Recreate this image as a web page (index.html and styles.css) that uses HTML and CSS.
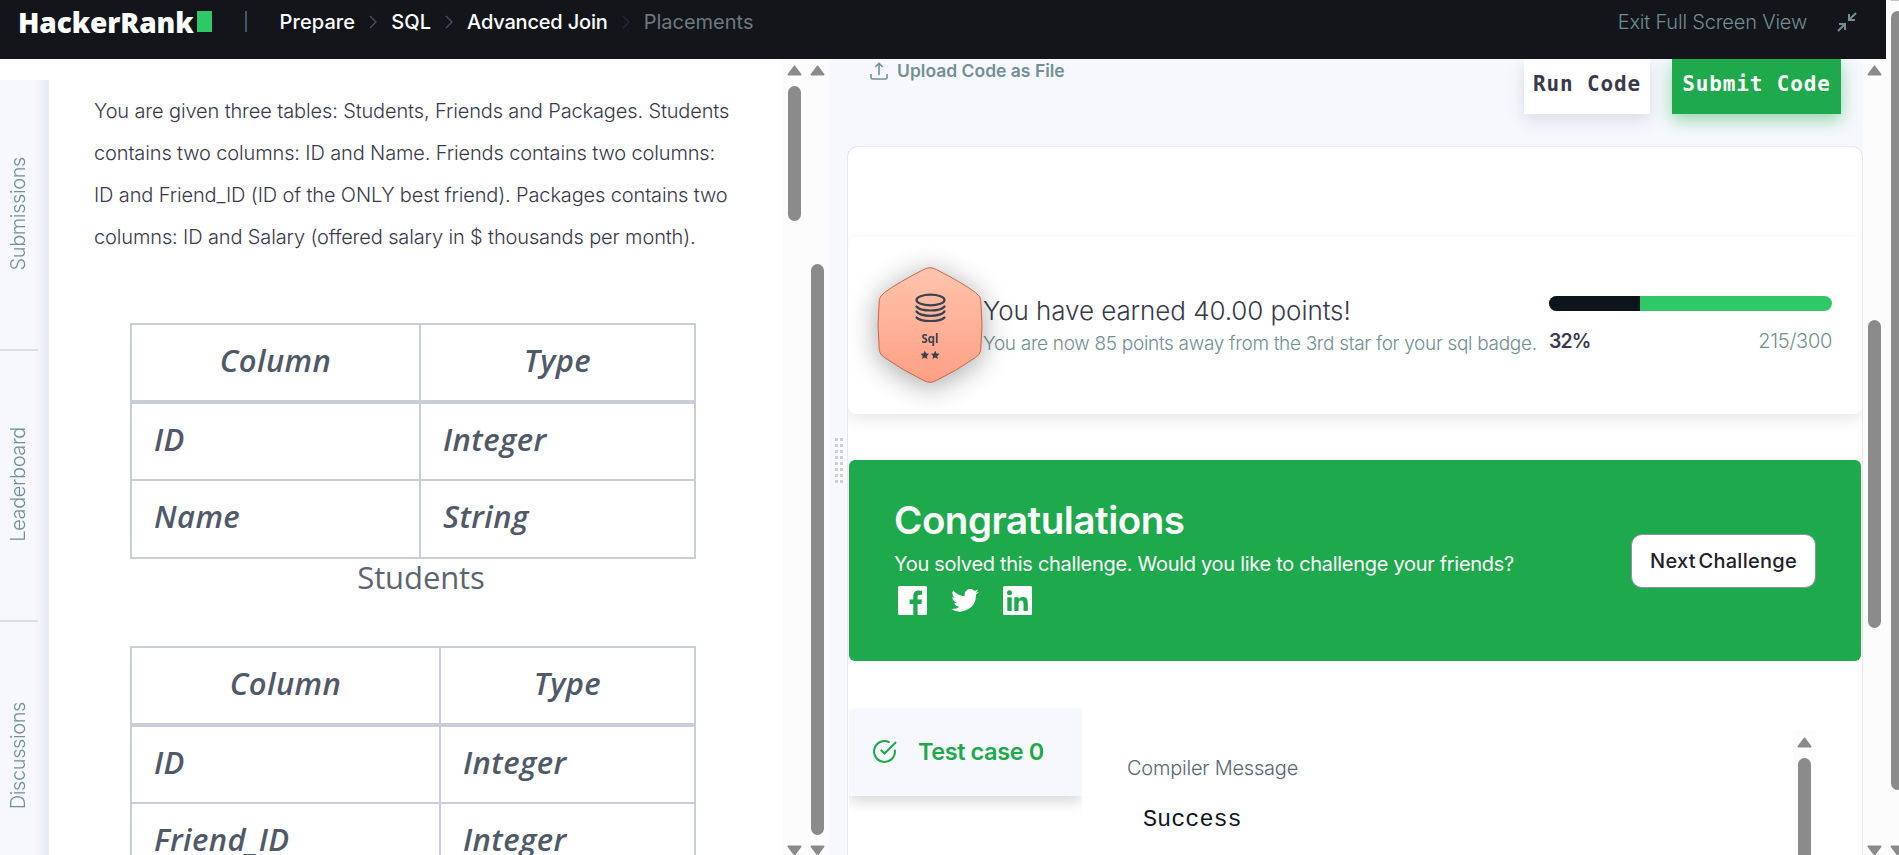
FILE: index.html
```html
<!DOCTYPE html>
<html lang="en">
<head>
<meta charset="utf-8">
<title>Placements | HackerRank</title>
<link rel="stylesheet" href="styles.css">
</head>
<body>
<div class="window">
  <div class="app">
    <header class="topbar">
      <span class="logo"><span class="logo-text">HackerRank</span><i class="logo-block"></i></span>
      <i class="topbar-divider"></i>
      <nav class="crumbs">
        <a class="crumb">Prepare</a>
        <svg class="chev" viewBox="0 0 8 14"><path d="M1 1l6 6-6 6"/></svg>
        <a class="crumb">SQL</a>
        <svg class="chev" viewBox="0 0 8 14"><path d="M1 1l6 6-6 6"/></svg>
        <a class="crumb long">Advanced Join</a>
        <svg class="chev dim" viewBox="0 0 8 14"><path d="M1 1l6 6-6 6"/></svg>
        <span class="current">Placements</span>
      </nav>
      <a class="exit"><span>Exit Full Screen View</span>
        <svg class="exit-icon" viewBox="0 0 20 20"><path d="M19 1l-7 7M12 2v6h6M1 19l7-7M2 12h6v6"/></svg>
      </a>
    </header>
    <div class="work">
      <aside class="sidenav">
        <a class="side-tab"><span>Submissions</span></a>
        <a class="side-tab"><span>Leaderboard</span></a>
        <a class="side-tab"><span>Discussions</span></a>
      </aside>
      <section class="problem">
        <p class="statement">
          You are given three tables: Students, Friends and Packages. Students<br>
          contains two columns: ID and Name. Friends contains two columns:<br>
          ID and Friend_ID (ID of the ONLY best friend). Packages contains two<br>
          columns: ID and Salary (offered salary in $ thousands per month).
        </p>
        <div class="schema students">
          <div class="th">Column</div><div class="th">Type</div>
          <div class="td">ID</div><div class="td">Integer</div>
          <div class="td">Name</div><div class="td">String</div>
        </div>
        <div class="schema-name">Students</div>
        <div class="schema friends">
          <div class="th">Column</div><div class="th">Type</div>
          <div class="td">ID</div><div class="td">Integer</div>
          <div class="td">Friend_ID</div><div class="td">Integer</div>
        </div>
      </section>
      <div class="scroll s-inner"><svg class="up" viewBox="0 0 15 11"><path d="M7.5 1.5L13.5 9.5H1.5Z"/></svg><i class="thumb"></i><svg class="down" viewBox="0 0 15 11"><path d="M1.5 1.5H13.5L7.5 9.5Z"/></svg></div>
      <div class="scroll s-outer"><svg class="up" viewBox="0 0 15 11"><path d="M7.5 1.5L13.5 9.5H1.5Z"/></svg><i class="thumb"></i><svg class="down" viewBox="0 0 15 11"><path d="M1.5 1.5H13.5L7.5 9.5Z"/></svg></div>
      <main class="code">
        <div class="grip"></div>
        <div class="code-body">
          <div class="toolbar">
            <a class="upload">
              <svg class="upload-icon" viewBox="0 0 18 18"><path d="M9 13V1.5M5.3 5L9 1.3 12.700 5M1 12v3.500a1.500 1.500 0 0 0 1.500 1.500h13a1.500 1.500 0 0 0 1.500-1.500V12"/></svg>
              <span>Upload Code as File</span>
            </a>
            <button class="btn run">Run Code</button>
            <button class="btn submit">Submit Code</button>
          </div>
          <div class="result">
            <div class="points">
              <svg class="badge" viewBox="0 0 106 116">
                <defs><linearGradient id="bronze" x1="0" y1="0" x2="0" y2="1"><stop offset="0" stop-color="#ffc4ac"/><stop offset="1" stop-color="#ff9f85"/></linearGradient></defs>
                <path class="hex" d="M46.500 2.600Q53 -1.200 59.500 2.600Q84 15 98.500 25.500Q103.300 29.200 103.700 32.500Q106.300 58 103.700 83.500Q103.300 87.500 98.500 90.500Q80 103.500 59.500 113.400Q53 117.200 46.500 113.400Q26 103.500 7.500 90.500Q2.700 87.500 2.300 83.500Q-.3 58 2.300 32.500Q2.700 29.200 7.500 25.500Q22 15 46.500 2.600Z"/>
                <g class="coins"><ellipse cx="53.500" cy="33" rx="14" ry="5.300"/><path d="M39.500 39.500Q42.500 43.500 53.500 43.500T67.500 39.500M39.500 44.500Q42.500 48.800 53.500 48.800T67.500 44.500M39.500 50.500Q42.500 54 53.500 54T67.500 50.500"/></g>
                <text class="badge-name" x="53" y="76">Sql</text>
                <path class="stars" d="M47.800 83.700l1.300 2.700 3 .4-2.200 2.100.5 3-2.600-1.400-2.700 1.400.6-3-2.200-2.100 3-.4zM58.200 83.700l1.300 2.700 3 .4-2.200 2.100.5 3-2.600-1.400-2.700 1.400.6-3-2.200-2.100 3-.4z"/>
              </svg>
              <div class="points-text">
                <div class="earned">You have earned 40.00 points!</div>
                <div class="away">You are now 85 points away from the 3rd star for your sql badge.</div>
              </div>
              <div class="progress">
                <div class="bar"><i style="width:32.300%"></i></div>
                <div class="progress-labels"><b>32%</b><span class="ratio">215/300</span></div>
              </div>
            </div>
            <div class="congrats">
              <div class="congrats-text">
                <h2>Congratulations</h2>
                <p>You solved this challenge. Would you like to challenge your friends?</p>
                <div class="social">
                  <svg class="sq" viewBox="0 0 29 29"><path fill-rule="evenodd" d="M1.500 0h26A1.500 1.500 0 0 1 29 1.500v26a1.500 1.500 0 0 1-1.500 1.500H19.600V18h3.800l.6-4.400h-4.400v-2.800c0-1.300.5-2.100 2.200-2.100h2.300V4.700a30 30 0 0 0-3.300-.2c-3.400 0-5.500 2-5.500 5.700v3.400h-3.700V18h3.700v11H1.500A1.500 1.500 0 0 1 0 27.500v-26A1.500 1.500 0 0 1 1.500 0z"/></svg>
                  <svg class="tw" viewBox="0 0 24 20"><path d="M24 2.400a10 10 0 0 1-2.800.8 5 5 0 0 0 2.100-2.700 10 10 0 0 1-3.100 1.200 4.900 4.900 0 0 0-8.400 4.500A14 14 0 0 1 1.700 1a4.900 4.900 0 0 0 1.500 6.600 5 5 0 0 1-2.200-.6c0 2.300 1.600 4.400 3.900 4.900a5 5 0 0 1-2.200.1 4.900 4.900 0 0 0 4.600 3.400A9.900 9.900 0 0 1 0 17.400 14 14 0 0 0 21.500 5a10 10 0 0 0 2.500-2.600z"/></svg>
                  <svg class="sq" viewBox="0 0 29 29"><path fill-rule="evenodd" d="M1.500 0h26A1.500 1.500 0 0 1 29 1.500v26a1.500 1.500 0 0 1-1.500 1.500h-26A1.500 1.500 0 0 1 0 27.500v-26A1.500 1.500 0 0 1 1.500 0zM6.500 4.200a2.500 2.500 0 1 0 0 5 2.500 2.500 0 0 0 0-5zM4.300 11.200V25h4.400V11.200zM11.300 11.200V25h4.300v-7c0-1.800.4-3.500 2.600-3.500s2.300 2 2.300 3.600V25h4.300v-7.600c0-3.800-.8-6.500-5.100-6.500a4.500 4.500 0 0 0-4.100 2.200V11.200z"/></svg>
                </div>
              </div>
              <button class="next">Next Challenge</button>
            </div>
            <div class="cases">
              <div class="case-list">
                <div class="case">
                  <svg class="case-icon" viewBox="0 0 24 24"><path d="M22 11.100V12a10 10 0 1 1-5.900-9.100M22.500 3.500L12 14l-3-3"/></svg>
                  <span>Test case 0</span>
                </div>
              </div>
              <div class="case-out">
                <div class="case-label">Compiler Message</div>
                <pre class="case-msg">Success</pre>
              </div>
              <div class="scroll s-case"><svg class="up" viewBox="0 0 15 11"><path d="M7.5 1.5L13.5 9.5H1.5Z"/></svg><i class="thumb"></i></div>
            </div>
          </div>
        </div>
      </main>
      <div class="scroll s-code"><svg class="up" viewBox="0 0 15 11"><path d="M7.5 1.5L13.5 9.5H1.5Z"/></svg><i class="thumb"></i><svg class="down" viewBox="0 0 15 11"><path d="M1.5 1.5H13.5L7.5 9.5Z"/></svg></div>
    </div>
  </div>
  <div class="scroll s-window"><svg class="up" viewBox="0 0 15 11"><path d="M7.5 1.5L13.5 9.5H1.5Z"/></svg><i class="thumb"></i><svg class="down" viewBox="0 0 15 11"><path d="M1.5 1.5H13.5L7.5 9.5Z"/></svg></div>
</div>
</body>
</html>
```
FILE: styles.css
```css
* { box-sizing: border-box; }
body { margin: 0; background: #fff; font-family: Inter, "Liberation Sans", sans-serif; font-size: 20px; color: #39424e; overflow: hidden; }
i { display: block; }
svg { display: block; flex: none; }

.window { display: flex; width: 1899px; height: 855px; overflow: hidden; }
.app { width: 1886px; display: flex; flex-direction: column; }

/* Header */
.topbar { height: 59px; padding: 0 29px 16px 18px; background: #13151a; display: flex; align-items: center; white-space: nowrap; }
.logo { display: flex; align-items: center; gap: 3px; width: 195px; font: 800 28px/28px "Open Sans", sans-serif; letter-spacing: -.1px; color: #fff; }
.logo-block { width: 15px; height: 21px; background: #2ec866; }
.topbar-divider { width: 1.500px; height: 21px; margin-left: 32px; background: #3f5a64; }
.crumbs { display: flex; align-items: center; margin-left: 33px; color: #fff; font-weight: 500; }
.crumb { letter-spacing: .1px; }
.crumb.long { letter-spacing: -.180px; }
.chev { width: 8px; height: 18px; margin: 0 14px; fill: none; stroke: #4a555c; stroke-width: 1.200; }
.chev.dim { stroke: #262c32; }
.current { color: #6b7a7d; font-weight: 400; letter-spacing: 0; }
.exit { margin-left: auto; display: flex; align-items: center; gap: 30px; color: #6f8d93; font-weight: 300; letter-spacing: -.2px; }
.exit-icon { width: 20px; height: 20px; fill: none; stroke: #738f93; stroke-width: 2; }

/* Side tabs */
.work { height: 796px; display: flex; overflow: hidden; background: #fff; }
.sidenav { width: 49px; height: 775px; margin-top: 21px; overflow: hidden; flex: none; background: linear-gradient(90deg, #f6f8fe 32px, #f1f3f9 40px, #e6e8ef 49px); }
.side-tab { display: flex; width: 38px; height: 271px; padding: 0 2px 2px 0; border-bottom: 2px solid #d7e0e2; justify-content: center; align-items: center; color: #738f93; font-weight: 300; letter-spacing: -.4px; }
.side-tab span { writing-mode: vertical-rl; transform: rotate(180deg); }

/* Problem statement */
.problem { width: 734px; height: 796px; overflow: hidden; padding: 31px 0 0 45px; flex: none; }
.statement { margin: 0; line-height: 42px; font-weight: 300; letter-spacing: -.135px; color: #39394a; white-space: nowrap; }
.schema { display: grid; grid-template-rows: 79px 77px 76px; width: 566px; border: 2px solid #c9cdd8; margin-left: 36px; font-family: "Open Sans", "Noto Sans", sans-serif; font-style: italic; font-size: 31px; font-weight: 600; letter-spacing: .4px; color: #505968; }
.students { grid-template-columns: 289px 273px; margin-top: 65px; }
.friends { grid-template-columns: 309px 253px; margin-top: 45px; }
.th, .td { display: flex; align-items: center; padding-bottom: 6px; border-bottom: 2px solid #c9cdd8; }
.th { justify-content: center; border-bottom-width: 4px; }
.td { padding-left: 22px; }
.schema > :nth-child(odd) { border-right: 2px solid #c9cdd8; }
.schema > :nth-last-child(-n+2) { border-bottom: 0; }
.schema-name { margin-left: 8px; width: 638px; height: 42px; line-height: 36px; text-align: center; font-family: "Open Sans", sans-serif; font-size: 31px; letter-spacing: -.1px; color: #5b6471; }

/* Scrollbars */
.scroll { position: relative; width: 23px; flex: none; background: #fcfcfc; overflow: hidden; }
.scroll svg { width: 15px; height: 11px; position: absolute; left: 4px; fill: #8b8b8b; stroke: #8b8b8b; stroke-width: 2; stroke-linejoin: round; }
.scroll .up { top: 6px; }
.scroll .down { bottom: -1px; }
.thumb { position: absolute; left: 5px; width: 13px; border-radius: 7px; background: #8b8b8b; }
.s-inner .thumb { top: 27px; height: 135px; }
.s-outer .thumb { top: 205px; height: 571px; }
.s-code .thumb { top: 261px; height: 308px; }
.s-window { width: 13px; }
.scroll.s-window .up { top: -10px; }
.s-window .thumb { top: 11px; height: 779px; }
.s-case { height: 124px; }
.s-case .thumb { top: 27px; height: 120px; }

/* Code panel */
.code { width: 1034px; display: flex; background: #f6f8fd; overflow: hidden; }
.grip { align-self: flex-start; width: 8px; height: 45px; margin: 379px 4px 0 6px; background: repeating-linear-gradient(180deg, transparent 0 3px, #f6f8fd 3px 6px), linear-gradient(90deg, #cfcfcf 3px, transparent 3px 5px, #cfcfcf 5px); }
.code-body { width: 1016px; }
.toolbar { height: 87px; display: flex; align-items: flex-start; padding: 0 22px 0 23px; gap: 22px; }
.upload { display: flex; align-items: center; gap: 9px; margin: 1px auto 0 0; font-size: 17.500px; line-height: 22px; font-weight: 600; color: #738f93; }
.upload-icon { width: 18px; height: 18px; fill: none; stroke: #738f93; stroke-width: 1.600; }
.btn { height: 55px; border: 0; padding: 0 0 5px; font: 700 21px/24px "DejaVu Sans Mono", monospace; letter-spacing: .850px; white-space: nowrap; }
.run { width: 126px; background: #fff; color: #39394a; box-shadow: 0 6px 16px rgba(60, 70, 90, .15); }
.submit { width: 169px; background: #1ea94c; color: #fff; box-shadow: 0 6px 16px rgba(30, 169, 76, .45); }

/* Result card */
.result { width: 1016px; height: 720px; border: 1.500px solid #e5e7f3; border-bottom: 0; border-radius: 11px 11px 0 0; background: #fff; padding-top: 90px; }
.points { height: 177px; display: flex; align-items: center; padding: 0 29px 0 29px; border-radius: 8px; box-shadow: 0 5px 16px rgba(0, 0, 0, .1); clip-path: inset(-12px 0 -30px 0); background: #fff; white-space: nowrap; }
.badge { width: 106px; height: 116px; margin-bottom: 2px; overflow: visible; filter: drop-shadow(0 4px 14px rgba(0, 0, 0, .35)); }
.hex { fill: url(#bronze); stroke: #c2694f; stroke-width: 1; }
.coins { fill: none; stroke: #39424e; stroke-width: 2.200; stroke-linecap: round; }
.badge-name { font: 700 11.500px "Open Sans", sans-serif; fill: #39424e; text-anchor: middle; }
.stars { fill: #39424e; }
.points-text { width: 566px; padding-top: 3px; }
.earned { font-size: 26px; line-height: 34px; font-weight: 300; letter-spacing: -.080px; color: #39394a; }
.away { font-size: 19px; line-height: 32px; font-weight: 300; letter-spacing: -.310px; color: #738f93; }
.progress { width: 283px; }
.bar { height: 15px; border-radius: 8px; overflow: hidden; background: #2ec866; }
.bar i { height: 15px; background: #0e141e; }
.progress-labels { display: flex; justify-content: space-between; line-height: 30px; margin-top: 15px; }
.progress-labels b { font-size: 19.500px; font-weight: 600; letter-spacing: -.900px; color: #39394a; }
.ratio { font-weight: 300; letter-spacing: -.3px; color: #738f93; }

.congrats { height: 201px; margin: 46px 1px 0; padding: 0 45px; border-radius: 6px; background: #1ea94c; color: #fff; display: flex; justify-content: space-between; align-items: center; white-space: nowrap; }
.congrats-text { padding-bottom: 10px; }
.congrats h2 { margin: 0; font-size: 38.500px; line-height: 47px; font-weight: 600; letter-spacing: -.480px; }
.congrats p { margin: 0; line-height: 40px; font-weight: 400; letter-spacing: -.3px; }
.social { display: flex; align-items: center; gap: 24px; padding-left: 4px; margin-top: 2px; fill: #fff; }
.sq { width: 29px; height: 29px; }
.tw { width: 28px; height: 23px; }
.next { width: 185px; height: 54px; border: 1px solid #8d93a5; border-radius: 11px; background: #fff; padding: 1px 0 0; font: 500 20px/24px Inter, sans-serif; letter-spacing: .280px; word-spacing: -3px; color: #1f202a; }

/* Test cases */
.cases { display: flex; margin-top: 47px; padding-left: 1px; }
.case-list { width: 233px; height: 120px; overflow: hidden; }
.case { display: flex; align-items: center; gap: 21px; height: 88px; padding: 0 0 1px 23px; border-radius: 10px 0 0 0; background: #f6f8fd; color: #1ea94c; font-size: 23.500px; font-weight: 600; letter-spacing: -.420px; box-shadow: 0 6px 14px rgba(0, 0, 0, .15); white-space: nowrap; }
.case-icon { width: 25px; height: 25px; fill: none; stroke: #1ea94c; stroke-width: 2; stroke-linecap: round; }
.case-out { width: 711px; padding: 45px 0 0 45px; }
.case-label { font-weight: 300; line-height: 30px; letter-spacing: -.220px; color: #576871; }
.case-msg { margin: 20px 0 0 16px; font: 23.500px/34px "Liberation Mono", monospace; color: #0e141e; }
.cases .scroll { margin-top: 23px; }
```
